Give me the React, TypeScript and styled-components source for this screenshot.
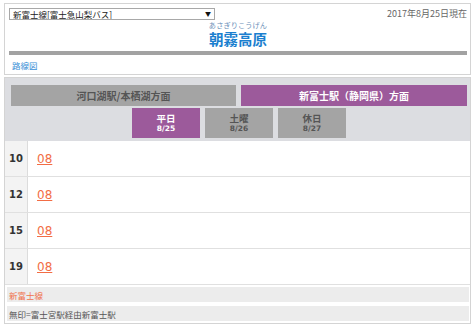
import styled, { createGlobalStyle } from "styled-components";

const GlobalStyle = createGlobalStyle`
  html, body { margin: 0; padding: 0; background: #fff; }
  body { font-family: "Noto Sans CJK JP", "DejaVu Sans", sans-serif; color: #555; }
`;

// 全体
const Page = styled.div`
  width: 467px;
  padding: 3px 3px 0 4px;
  display: flex;
  flex-direction: column;
  gap: 2px;
`;

// 上のヘッダーボックス
const HeadBox = styled.div`
  border: 1px solid #d4d4d4;
  height: 72px;
  box-sizing: border-box;
  display: flex;
  flex-direction: column;
  padding: 4px 3px 0 4px;
`;

const HeadRow = styled.div`
  display: flex;
  justify-content: space-between;
  align-items: center;
  height: 12px;
`;

const SelectWrap = styled.div`
  position: relative;
  width: 206px;
  height: 12px;
`;

const Select = styled.select`
  display: block;
  appearance: none;
  width: 100%;
  height: 12px;
  border: 1px solid #a8a8a8;
  background: #fff;
  color: #222;
  font-family: "Noto Sans CJK JP", sans-serif;
  font-size: 8.5px;
  line-height: 10px;
  padding: 0 0 0 3px;
  margin: 0;
  box-sizing: border-box;
  outline: none;
`;

const Arrow = styled.span`
  position: absolute;
  right: 4px;
  top: 1px;
  font-size: 6px;
  line-height: 10px;
  color: #111;
  pointer-events: none;
`;

const Today = styled.span`
  font-size: 9px;
  color: #666;
  line-height: 12px;
`;

const TitleBlock = styled.div`
  display: flex;
  flex-direction: column;
  align-items: center;
  margin-top: 1px;
`;

const Ruby = styled.span`
  font-size: 7.2px;
  line-height: 9px;
  color: #6b8fb8;
  letter-spacing: 0.1px;
`;

const Title = styled.h1`
  margin: 0;
  font-size: 14.5px;
  line-height: 17px;
  font-weight: bold;
  color: #1b7fcf;
`;

const Bar = styled.div`
  height: 4px;
  background: #a2a2a2;
  margin: 4px 0 0 0;
`;

const MapLink = styled.a`
  font-size: 8.5px;
  line-height: 10px;
  color: #3a8fd6;
  text-decoration: none;
  margin: 5px 0 0 3px;
`;

// 時刻表ボックス
const TableBox = styled.div`
  border: 1px solid #d4d4d4;
  display: flex;
  flex-direction: column;
`;

const TabArea = styled.div`
  background: #dcdde1;
  padding: 7px 4px 3px 6px;
  display: flex;
  flex-direction: column;
  gap: 2px;
`;

const DirRow = styled.div`
  display: grid;
  grid-template-columns: 225px 226px;
  gap: 5px;
`;

const DirTab = styled.div<{ $active?: boolean }>`
  height: 21px;
  display: flex;
  align-items: center;
  justify-content: center;
  font-size: 10px;
  font-weight: bold;
  background: ${(p) => (p.$active ? "#9c5a9b" : "#a4a4a4")};
  color: ${(p) => (p.$active ? "#fff" : "#555")};
`;

const DayRow = styled.div`
  display: flex;
  justify-content: center;
  gap: 5px;
  padding-left: 1px;
`;

const DayTab = styled.div<{ $active?: boolean }>`
  width: 68px;
  height: 30px;
  display: flex;
  flex-direction: column;
  align-items: center;
  justify-content: center;
  background: ${(p) => (p.$active ? "#9c5a9b" : "#a4a4a4")};
  color: ${(p) => (p.$active ? "#fff" : "#555")};
`;

const DayName = styled.span`
  font-size: 9.5px;
  font-weight: bold;
  line-height: 11px;
`;

const DayDate = styled.span`
  font-family: "DejaVu Sans", sans-serif;
  font-size: 7.5px;
  font-weight: bold;
  line-height: 9px;
`;

const Row = styled.div`
  display: flex;
  height: 35px;
  border-bottom: 1px solid #e0e0e0;
`;

const Hour = styled.div`
  width: 22px;
  background: #f3f3f3;
  border-right: 1px solid #dcdcdc;
  display: flex;
  align-items: center;
  justify-content: center;
  font-family: "DejaVu Sans", sans-serif;
  font-weight: bold;
  font-size: 10px;
  color: #333;
`;

const Minutes = styled.div`
  display: flex;
  align-items: center;
  padding-left: 9px;
  gap: 10px;
`;

const Minute = styled.a`
  font-family: "DejaVu Sans", sans-serif;
  font-size: 12px;
  color: #f26d45;
  text-decoration: underline;
`;

const Notes = styled.div`
  display: flex;
  flex-direction: column;
  gap: 4px;
  padding: 2px 1px 2px 2px;
`;

const Note = styled.div<{ $accent?: boolean }>`
  height: 15px;
  background: #ececec;
  display: flex;
  align-items: center;
  padding-left: 2px;
  font-size: 8.5px;
  color: ${(p) => (p.$accent ? "#f0734d" : "#555")};
`;

const hours = [
  { h: "10", m: ["08"] },
  { h: "12", m: ["08"] },
  { h: "15", m: ["08"] },
  { h: "19", m: ["08"] },
];

export default function App() {
  return (
    <>
      <GlobalStyle />
      <Page>
        <HeadBox>
          <HeadRow>
            <SelectWrap>
              <Select defaultValue="a">
                <option value="a">新富士線[富士急山梨バス]</option>
              </Select>
              <Arrow>▼</Arrow>
            </SelectWrap>
            <Today>2017年8月25日現在</Today>
          </HeadRow>
          <TitleBlock>
            <Ruby>あさぎりこうげん</Ruby>
            <Title>朝霧高原</Title>
          </TitleBlock>
          <Bar />
          <MapLink href="#">路線図</MapLink>
        </HeadBox>

        <TableBox>
          <TabArea>
            <DirRow>
              <DirTab>河口湖駅/本栖湖方面</DirTab>
              <DirTab $active>新富士駅（静岡県）方面</DirTab>
            </DirRow>
            <DayRow>
              <DayTab $active>
                <DayName>平日</DayName>
                <DayDate>8/25</DayDate>
              </DayTab>
              <DayTab>
                <DayName>土曜</DayName>
                <DayDate>8/26</DayDate>
              </DayTab>
              <DayTab>
                <DayName>休日</DayName>
                <DayDate>8/27</DayDate>
              </DayTab>
            </DayRow>
          </TabArea>
          {hours.map((r) => (
            <Row key={r.h}>
              <Hour>{r.h}</Hour>
              <Minutes>
                {r.m.map((m) => (
                  <Minute href="#" key={m}>{m}</Minute>
                ))}
              </Minutes>
            </Row>
          ))}
          <Notes>
            <Note $accent>新富士線</Note>
            <Note>無印=富士宮駅経由新富士駅</Note>
          </Notes>
        </TableBox>
      </Page>
    </>
  );
}
